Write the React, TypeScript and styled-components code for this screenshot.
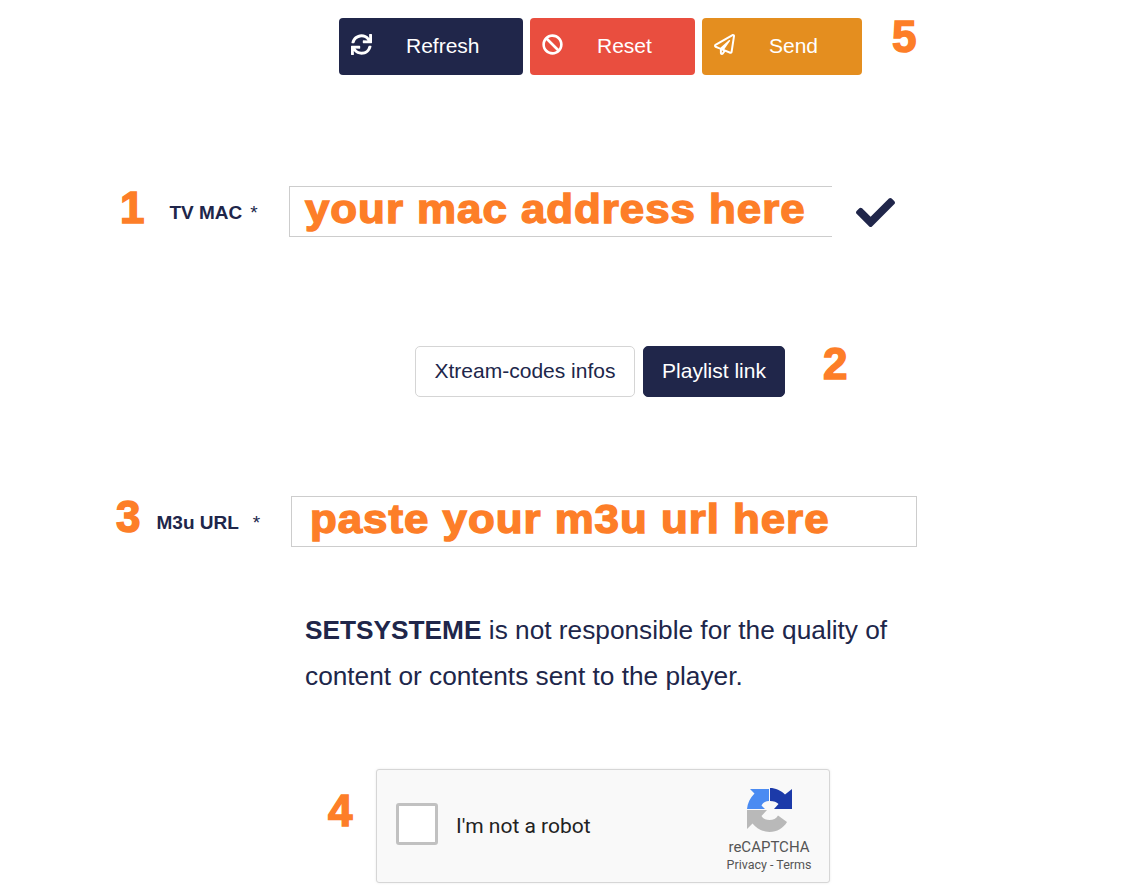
import React from 'react';
import styled, {createGlobalStyle} from 'styled-components';
import {FaBan, FaCheck, FaRegPaperPlane, FaSync} from 'react-icons/fa';

const Ink = '#20264a';
const Annotation = '#fd7e28';

const GlobalStyle = createGlobalStyle`
  body {
    margin: 0;
    background: #fff;
    color: ${Ink};
    font-family: 'Liberation Sans', Arial, sans-serif;
  }
`;

function RecaptchaLogo(): JSX.Element {
  return (
    <svg width="45" height="44" viewBox="0 0 45 44">
      <path d="M0 22 V41 L5.5 35.5 C9.5 40.5 15.500 44 22.500 44 C30 44 36.500 40 40 34 L31 27.500 C29.500 30.500 26 32 22.500 32 C19 32 16 30.500 14.500 28 L20 22 Z" fill="#b9b9b9" />
      <path d="M3 1 H22 V13 C18.500 13 16 14.500 14.500 17.500 L18 21 H0 C0.500 15 3 10 7.500 5.500 Z" fill="#4a8bf2" />
      <path d="M23 0 C28.500 0 34 2.500 38 6.500 L45 1 V21 H27 L31.500 16 C29.500 14 27 13 23 13 Z" fill="#1c3aa9" />
    </svg>
  );
}

export default function App(): JSX.Element {
  return (
    <Page>
      <GlobalStyle />
      <Toolbar>
        <ActionButton $bg="#20264a" $width={184} $textGap={34}>
          <FaSync size={21} />
          <span>Refresh</span>
        </ActionButton>
        <ActionButton $bg="#e94e3f" $width={165} $textGap={34}>
          <FaBan size={21} />
          <span>Reset</span>
        </ActionButton>
        <ActionButton $bg="#e48e1f" $width={160} $textGap={34}>
          <FaRegPaperPlane size={21} />
          <span>Send</span>
        </ActionButton>
        <ToolbarStep>5</ToolbarStep>
      </Toolbar>

      <MacRow>
        <MacStep>1</MacStep>
        <MacLabel>
          TV MAC<Star $gap={8}>*</Star>
        </MacLabel>
        <MacField>
          <FieldText>your mac address here</FieldText>
        </MacField>
        <CheckMark>
          <FaCheck size={39} />
        </CheckMark>
      </MacRow>

      <Tabs>
        <Tab $width={220}>Xtream-codes infos</Tab>
        <Tab $width={142} $active>
          Playlist link
        </Tab>
        <TabsStep>2</TabsStep>
      </Tabs>

      <UrlRow>
        <UrlStep>3</UrlStep>
        <UrlLabel>
          M3u URL<Star $gap={14}>*</Star>
        </UrlLabel>
        <UrlField>
          <FieldText>paste your m3u url here</FieldText>
        </UrlField>
      </UrlRow>

      <Notice>
        <strong>SETSYSTEME</strong> is not responsible for the quality of content or contents sent to the player.
      </Notice>

      <CaptchaRow>
        <CaptchaStep>4</CaptchaStep>
        <Captcha>
          <CaptchaBox />
          <CaptchaText>I'm not a robot</CaptchaText>
          <CaptchaBrand>
            <RecaptchaLogo />
            <BrandName>reCAPTCHA</BrandName>
            <BrandLinks>Privacy - Terms</BrandLinks>
          </CaptchaBrand>
        </Captcha>
      </CaptchaRow>
    </Page>
  );
}

const Page = styled.div`
  width: 1122px;
  height: 892px;
  overflow: hidden;
  padding-top: 18px;
  box-sizing: border-box;
`;

const Toolbar = styled.div`
  display: flex;
  align-items: flex-start;
  gap: 7px;
  margin-left: 339px;
`;

const ActionButton = styled.button<{$bg: string; $width: number; $textGap: number}>`
  display: flex;
  align-items: center;
  width: ${p => p.$width}px;
  height: 57px;
  padding: 0 0 2px 12px;
  border: none;
  border-radius: 4px;
  background: ${p => p.$bg};
  color: #fff;
  font: 21px 'Liberation Sans', Arial, sans-serif;

  svg {
    flex: none;
    margin-bottom: 3px;
  }

  span {
    margin-left: ${p => p.$textGap}px;
  }
`;

const Step = styled.div`
  flex: none;
  color: ${Annotation};
  font-size: 44px;
  font-weight: bold;
  -webkit-text-stroke: 1.5px ${Annotation};
  line-height: 50px;
`;

const ToolbarStep = styled(Step)`
  margin: -6px 0 0 23px;
`;

const MacRow = styled.div`
  display: flex;
  align-items: center;
  height: 51px;
  margin: 111px 0 0 120px;
`;

const MacStep = styled(Step)`
  margin-bottom: 8px;
`;

const FieldLabel = styled.div`
  flex: none;
  font-size: 19px;
  font-weight: bold;
`;

const Star = styled.span<{$gap: number}>`
  margin-left: ${p => p.$gap}px;
  font-weight: normal;
`;

const MacLabel = styled(FieldLabel)`
  width: 120px;
  margin: 2px 0 0 25px;
`;

const Field = styled.div`
  height: 51px;
  box-sizing: border-box;
  border: 1px solid #cdcdcd;
  color: ${Annotation};
  font-size: 41px;
  font-weight: bold;
  letter-spacing: 0.9px;
  -webkit-text-stroke: 1.4px ${Annotation};
  line-height: 45px;
  white-space: nowrap;
`;

const FieldText = styled.span`
  display: inline-block;
  transform: scaleX(1.07);
  transform-origin: left center;
`;

const MacField = styled(Field)`
  width: 543px;
  padding-left: 15px;
  border-right: none;
`;

const CheckMark = styled.div`
  display: flex;
  margin: 2px 0 0 24px;
`;

const Tabs = styled.div`
  display: flex;
  gap: 8px;
  margin: 109px 0 0 415px;
`;

const Tab = styled.div<{$active?: boolean; $width: number}>`
  width: ${p => p.$width}px;
  height: 51px;
  box-sizing: border-box;
  border: 1px solid ${p => (p.$active ? Ink : '#d5d5d5')};
  border-radius: 5px;
  background: ${p => (p.$active ? Ink : '#fff')};
  color: ${p => (p.$active ? '#fff' : Ink)};
  font-size: 21px;
  line-height: 48px;
  text-align: center;
`;

const TabsStep = styled(Step)`
  margin: -7px 0 0 30px;
`;

const UrlRow = styled.div`
  display: flex;
  align-items: center;
  height: 51px;
  margin: 99px 0 0 116px;
`;

const UrlStep = styled(Step)`
  margin-bottom: 10px;
`;

const UrlLabel = styled(FieldLabel)`
  width: 135px;
  margin: 2px 0 0 16px;
`;

const UrlField = styled(Field)`
  width: 626px;
  padding-left: 18px;
`;

const Notice = styled.p`
  width: 600px;
  margin: 60px 0 0 305px;
  font-size: 26.25px;
  line-height: 46px;
`;

const CaptchaRow = styled.div`
  display: flex;
  align-items: center;
  margin: 70px 0 0 328px;
`;

const CaptchaStep = styled(Step)`
  width: 48px;
  margin-bottom: 30px;
`;

const Captcha = styled.div`
  display: flex;
  align-items: center;
  width: 454px;
  height: 114px;
  box-sizing: border-box;
  padding-left: 19px;
  border: 1px solid #d6d6d6;
  border-radius: 3px;
  background: #f9f9f9;
  box-shadow: 0 0 3px rgba(0, 0, 0, 0.08);
  font-family: Roboto, sans-serif;
`;

const CaptchaBox = styled.div`
  width: 42px;
  height: 42px;
  margin-bottom: 4px;
  box-sizing: border-box;
  border: 3px solid #c1c1c1;
  border-radius: 3px;
  background: #fff;
`;

const CaptchaText = styled.div`
  margin-left: 18px;
  color: #222;
  font-size: 21px;
`;

const CaptchaBrand = styled.div`
  display: flex;
  flex-direction: column;
  align-items: center;
  width: 90px;
  margin: 10px 15px 0 auto;
  color: #555;
`;

const BrandName = styled.div`
  margin-top: 6px;
  font-size: 15px;
  line-height: 18px;
  white-space: nowrap;
`;

const BrandLinks = styled.div`
  font-size: 12.5px;
  line-height: 18px;
  white-space: nowrap;
`;
